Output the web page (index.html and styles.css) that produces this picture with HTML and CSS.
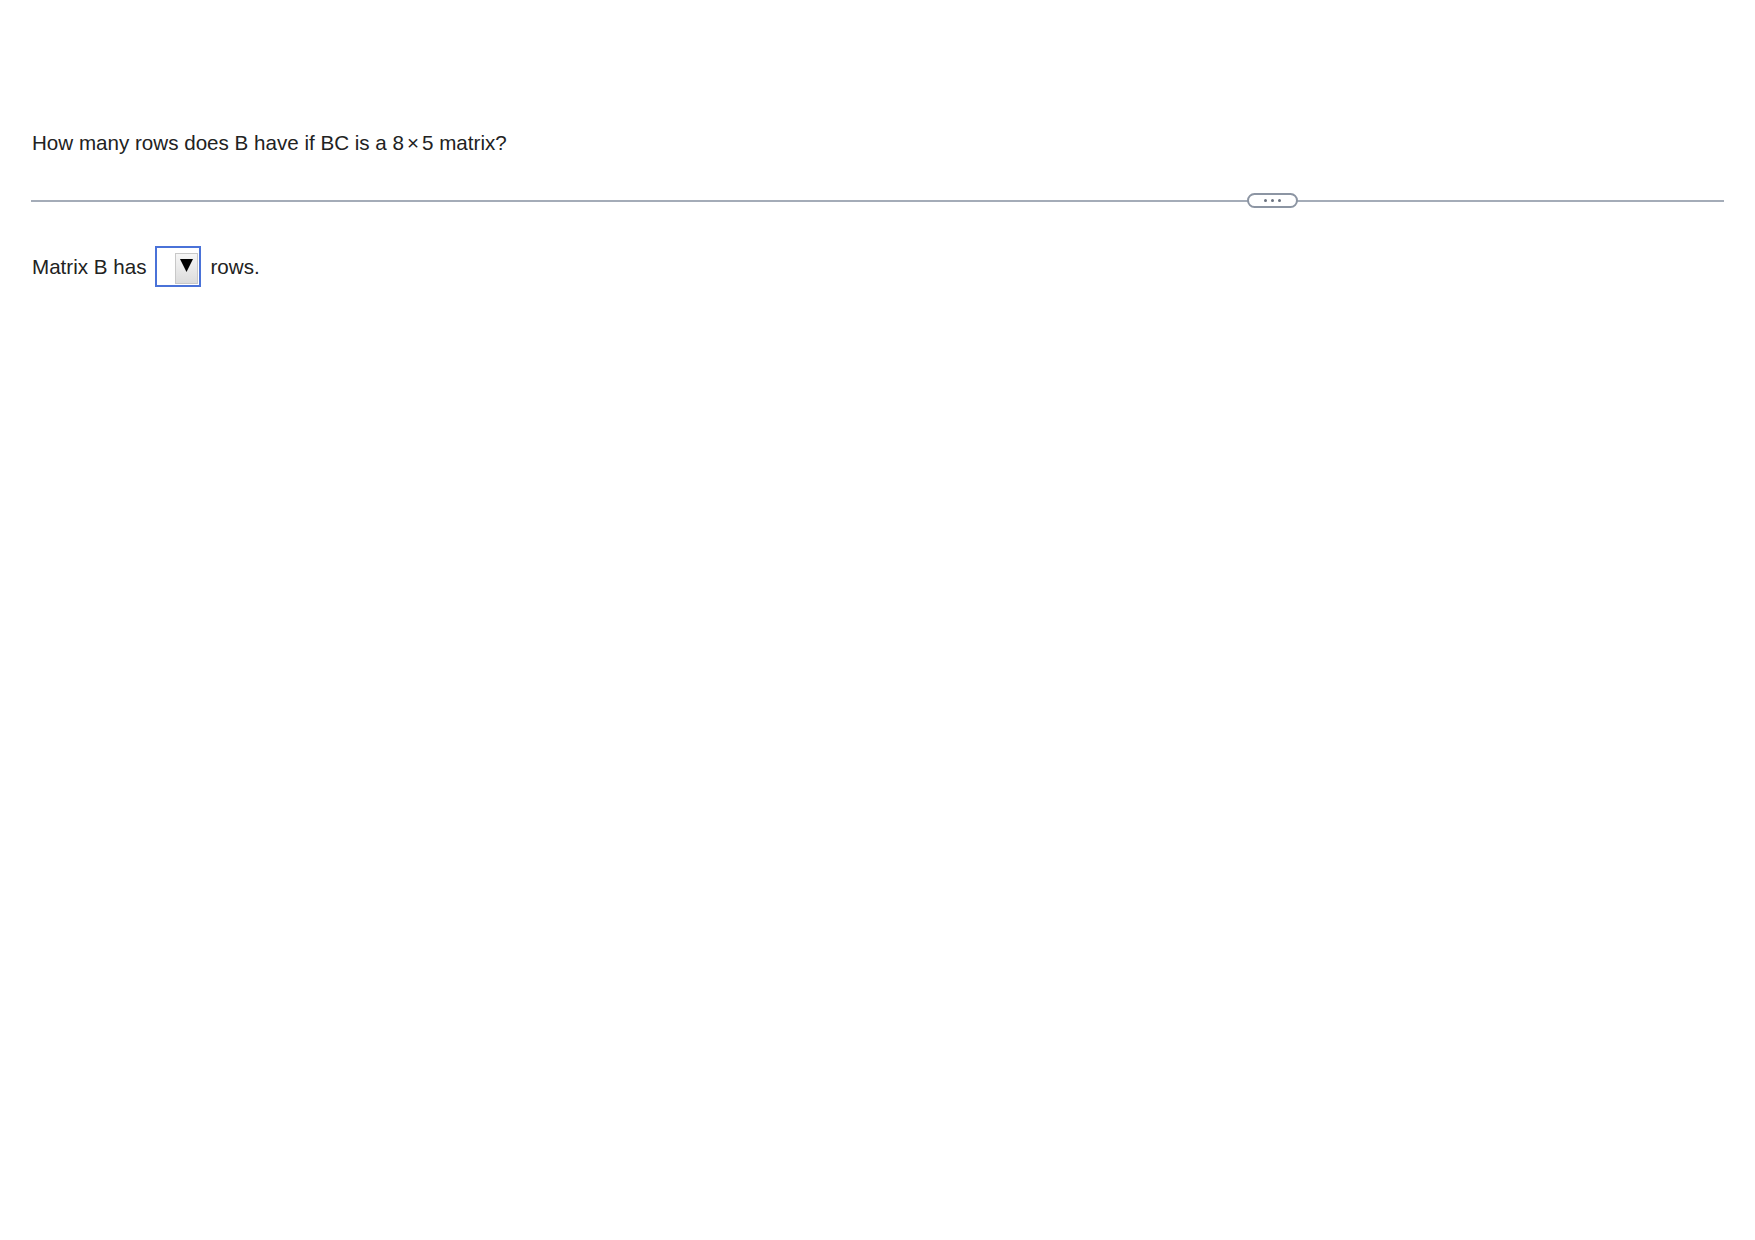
FILE: index.html
```html
<!DOCTYPE html>
<html>
<head>
<meta charset="utf-8">
<link rel="stylesheet" href="styles.css">
</head>
<body>
<div class="page">
  <p class="question">How many rows does B have if BC is a 8<span class="times">×</span>5 matrix?</p>
  <div class="divider">
    <span class="pill"><i></i><i></i><i></i></span>
  </div>
  <div class="answer">
    <span>Matrix B has</span>
    <span class="select"><span class="arrow"><svg width="13" height="13" viewBox="0 0 13 13"><polygon points="0,0 13,0 6.5,13" fill="#000"/></svg></span></span>
    <span>rows.</span>
  </div>
</div>
</body>
</html>
```
FILE: styles.css
```css
html, body {
  margin: 0;
  padding: 0;
  background: #fff;
}
.page {
  padding: 131px 31px 0 32px;
  font-family: "Liberation Sans", Arial, sans-serif;
  font-size: 20.6px;
  color: #222;
}
.question {
  margin: 0;
  line-height: 24px;
}
.times {
  margin: 0 3px;
}
.divider {
  margin-top: 45px;
  height: 2px;
  background: #a4acb8;
  position: relative;
  width: 1693px;
  margin-left: -1px;
}
.pill {
  position: absolute;
  left: 1216px;
  top: -7px;
  width: 47px;
  height: 11px;
  border: 2px solid #8c95a3;
  border-radius: 8px;
  background: #fff;
  display: flex;
  align-items: center;
  justify-content: center;
  gap: 4px;
}
.pill i {
  width: 3px;
  height: 3px;
  background: #6b7380;
  border-radius: 50%;
}
.answer {
  margin-top: 44px;
  display: flex;
  align-items: center;
  gap: 9px;
}
.select {
  border: 2px solid #4a72d8;
  background: #fff;
  display: flex;
  justify-content: flex-end;
  align-items: stretch;
  padding: 5px 1px 1px 0;
  box-sizing: border-box;
  width: 46px;
  height: 41px;
}
.arrow {
  width: 23px;
  background: linear-gradient(#f6f6f6, #dcdcdc);
  border: 1px solid #c8c8c8;
  box-sizing: border-box;
  display: flex;
  justify-content: center;
  align-items: flex-start;
  padding-top: 5px;
}
```
